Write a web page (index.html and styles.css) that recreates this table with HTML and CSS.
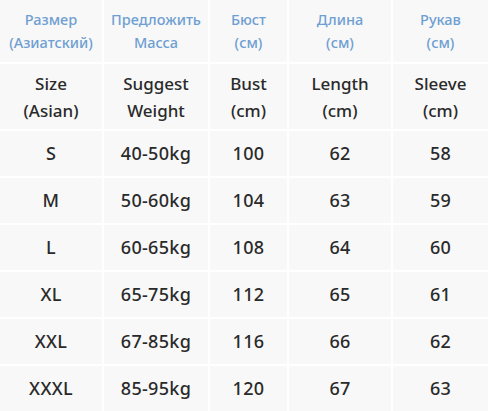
FILE: index.html
```html
<!DOCTYPE html>
<html lang="ru">
<head>
<meta charset="utf-8">
<link rel="stylesheet" href="styles.css">
</head>
<body>
<div class="table">
  <div class="cell ru">Размер<br>(Азиатский)</div>
  <div class="cell ru">Предложить<br>Масса</div>
  <div class="cell ru">Бюст<br>(см)</div>
  <div class="cell ru">Длина<br>(см)</div>
  <div class="cell ru">Рукав<br>(см)</div>

  <div class="cell en">Size<br>(Asian)</div>
  <div class="cell en">Suggest<br>Weight</div>
  <div class="cell en">Bust<br>(cm)</div>
  <div class="cell en">Length<br>(cm)</div>
  <div class="cell en">Sleeve<br>(cm)</div>

  <div class="cell">S</div><div class="cell">40-50kg</div><div class="cell">100</div><div class="cell">62</div><div class="cell">58</div>
  <div class="cell">M</div><div class="cell">50-60kg</div><div class="cell">104</div><div class="cell">63</div><div class="cell">59</div>
  <div class="cell">L</div><div class="cell">60-65kg</div><div class="cell">108</div><div class="cell">64</div><div class="cell">60</div>
  <div class="cell">XL</div><div class="cell">65-75kg</div><div class="cell">112</div><div class="cell">65</div><div class="cell">61</div>
  <div class="cell">XXL</div><div class="cell">67-85kg</div><div class="cell">116</div><div class="cell">66</div><div class="cell">62</div>
  <div class="cell">XXXL</div><div class="cell">85-95kg</div><div class="cell">120</div><div class="cell">67</div><div class="cell">63</div>
</div>
</body>
</html>
```

FILE: styles.css
```css
html, body {
  margin: 0;
  padding: 0;
  background: #ffffff;
}
.table {
  display: grid;
  width: 488px;
  height: 411px;
  grid-template-columns: 102px 104px 77px 102px 95px;
  grid-template-rows: 62px 65px repeat(6, 45px);
  gap: 2px;
  background: #ffffff;
  font-family: "Noto Sans", "Open Sans", sans-serif;
}
.cell {
  background: #f8f8f8;
  display: flex;
  align-items: center;
  justify-content: center;
  text-align: center;
  color: #2a2a2a;
  font-size: 18px;
  font-weight: 500;
  line-height: 27px;
  letter-spacing: 0.3px;
}
.cell.ru {
  color: #6f9fd2;
  font-size: 14.5px;
  line-height: 23px;
  letter-spacing: 0;
}
.cell.en {
  font-size: 17px;
  line-height: 27px;
  letter-spacing: 0;
}
```
